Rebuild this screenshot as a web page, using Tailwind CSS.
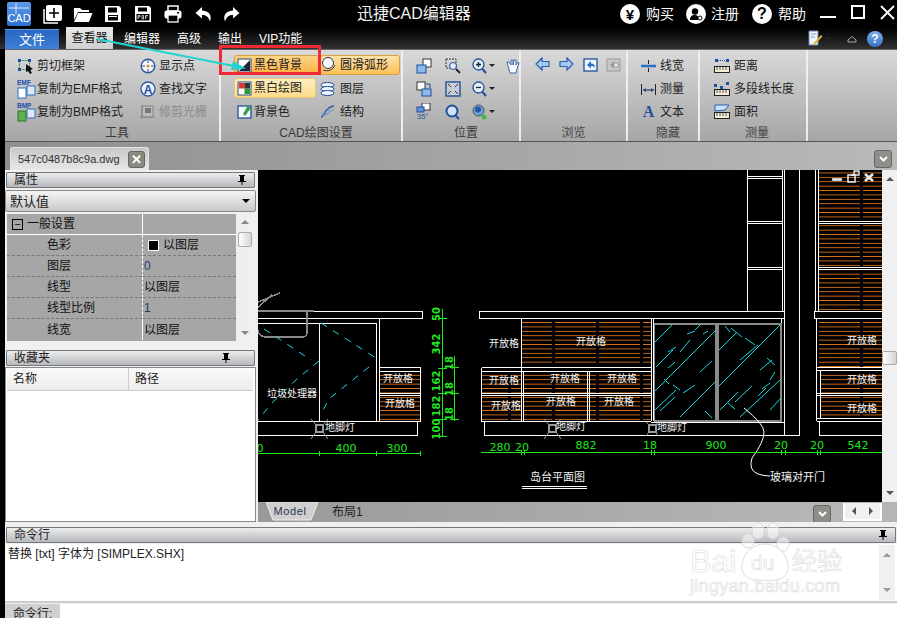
<!DOCTYPE html>
<html lang="zh-CN">
  <head>
    <meta charset="UTF-8" />
    <title>迅捷CAD编辑器</title>
    <script src="https://cdn.jsdelivr.net/npm/@tailwindcss/browser@4"></script>
  </head>
  <body class="overflow-hidden bg-black">
    <div class="relative flex flex-col w-[897px] h-[618px] overflow-hidden bg-black text-[12px] leading-none text-[#222] font-['Liberation_Sans','Noto_Sans_CJK_SC',sans-serif]">

      <!-- Title bar -->
      <header class="flex items-center h-[28px] shrink-0 bg-black text-white [&>*]:shrink-0 whitespace-nowrap">
        <div class="ml-[7px] w-[24px] h-[24px] rounded-[2px] bg-gradient-to-b from-[#5b9be8] to-[#2f6fd0] relative overflow-hidden flex items-end justify-center">
          <svg class="absolute inset-0" width="24" height="24" viewBox="0 0 24 24"><path d="M2 6H22M9 1V12" stroke="#dbe9ff" fill="none"/></svg>
          <span class="relative text-[11px] mb-[2px] text-white">CAD</span>
        </div>
        <svg class="ml-[12px]" width="20" height="20" viewBox="0 0 20 20"><path d="M1 5V19H15" fill="none" stroke="#fff" stroke-width="1.5"/><rect x="3" y="1" width="16" height="16" rx="2" fill="#fff"/><path d="M11 4V14M6 9H16" stroke="#000" stroke-width="1.6"/></svg>
        <svg class="ml-[10px]" width="20" height="18" viewBox="0 0 20 18"><path d="M1 3H7L9 5H16V7H5L1 15Z" fill="#fff"/><path d="M5 8H19.500L16 17H1Z" fill="#fff"/></svg>
        <svg class="ml-[11px]" width="18" height="18" viewBox="0 0 18 18"><path d="M1 1H15L17 3V17H1Z" fill="#fff"/><rect x="4" y="2.500" width="9" height="5" fill="#000"/><rect x="4" y="10" width="10" height="5.500" fill="#000"/><rect x="5" y="11" width="8" height="1" fill="#fff"/></svg>
        <svg class="ml-[12px]" width="18" height="18" viewBox="0 0 18 18"><path d="M1 1H15L17 3V17H1Z" fill="#fff"/><rect x="4" y="2.500" width="9" height="4" fill="#000"/><rect x="2.500" y="9" width="13" height="6.500" fill="#000"/><path d="M4 10.500V14M4 10.500H6V12H4M8 10.500V14H9.500V10.500H8M11.500 14V10.500H14M11.500 12H13.500" stroke="#fff" stroke-width=".7" fill="none"/></svg>
        <svg class="ml-[12px]" width="18" height="18" viewBox="0 0 18 18"><rect x="4" y="1" width="10" height="5" fill="none" stroke="#fff" stroke-width="1.500"/><rect x="0.500" y="5.500" width="17" height="8" rx="2" fill="#fff"/><rect x="4" y="10" width="10" height="7" fill="#000" stroke="#fff" stroke-width="1.300"/><rect x="13" y="7" width="2" height="1.500" fill="#000"/></svg>
        <svg class="ml-[13px]" width="18" height="18" viewBox="0 0 18 18"><path d="M7 2L0.500 8L7 13.500V10C11 10 13.500 11.500 15 16.500C17 11 15 6 7 5.500Z" fill="#fff"/></svg>
        <svg class="ml-[9px]" width="18" height="18" viewBox="0 0 18 18"><path d="M11 2L17.500 8L11 13.500V10C7 10 4.500 11.500 3 16.500C1 11 3 6 11 5.500Z" fill="#fff"/></svg>
        <span class="ml-[117px] w-[120px] text-[16px] text-[#f2f2f2]">迅捷CAD编辑器</span>
        <span class="ml-[143px] flex items-center justify-center w-[20px] h-[20px] rounded-full bg-white text-black text-[15px] font-bold">¥</span>
        <span class="ml-[6px] text-[14px] w-[28px]">购买</span>
        <span class="ml-[12px] w-[20px] h-[20px] rounded-full bg-white flex items-center justify-center">
          <svg width="14" height="14" viewBox="0 0 14 14"><circle cx="6" cy="4.500" r="3.200" fill="#000"/><path d="M1 13C1 9 3 8 6 8C8 8 9 9 9 10V13Z" fill="#000"/><circle cx="11" cy="11" r="2" fill="none" stroke="#000"/></svg>
        </span>
        <span class="ml-[5px] text-[14px] w-[28px]">注册</span>
        <span class="ml-[13px] flex items-center justify-center w-[20px] h-[20px] rounded-full bg-white text-black text-[16px] font-bold">?</span>
        <span class="ml-[6px] text-[14px] w-[28px]">帮助</span>
        <svg class="ml-[14px]" width="75" height="20" viewBox="0 0 75 20"><path d="M0 13H16" stroke="#fff" stroke-width="2"/><rect x="32" y="2" width="12" height="12" fill="none" stroke="#fff" stroke-width="2"/><path d="M61 2L74 15M74 2L61 15" stroke="#fff" stroke-width="1.800"/></svg>
      </header>

      <!-- Menu row -->
      <nav class="flex items-end h-[21px] shrink-0 pl-[5px] bg-gradient-to-b from-[#030303] to-[#333] text-white">
        <div class="w-[54px] h-[20px] flex items-center justify-center text-[13px] bg-gradient-to-b from-[#2a66c0] to-[#3f81d6] border-t border-[#5f9ae6]">文件</div>
        <div class="ml-[7px] w-[47px] h-[22px] flex items-center justify-center text-[#111] bg-gradient-to-b from-[#e8e8e8] to-[#d0d0d0]">查看器</div>
        <span class="ml-[11px] mb-[4px] w-[53px]">编辑器</span>
        <span class="mb-[4px] w-[41px]">高级</span>
        <span class="mb-[4px] w-[41px]">输出</span>
        <span class="mb-[4px] w-[100px]">VIP功能</span>
        <div class="ml-auto mr-[14px] mb-[2px] flex items-center">
          <svg width="16" height="17" viewBox="0 0 16 17"><path d="M2 1H11V15H2Z" fill="#eef2fb" stroke="#6a86b8"/><path d="M4 4H9M4 7H8" stroke="#7a9ad0"/><path d="M6 14L14 5L15.500 6.500L7.500 15Z" fill="#e8b028"/></svg>
          <span class="ml-[3px] w-0 h-0 border-x-[3px] border-t-[3px] border-x-transparent border-t-[#222]"></span>
          <svg class="ml-[15px]" width="10" height="8" viewBox="0 0 10 8"><path d="M1 5L5 1.500L9 5V7H1Z" fill="none" stroke="#aaa"/></svg>
          <span class="ml-[10px] flex items-center justify-center w-[16px] h-[16px] rounded-full bg-gradient-to-b from-[#7fb0ec] to-[#3a72c8] text-white text-[12px] font-bold">?</span>
        </div>
      </nav>

      <!-- Ribbon -->
      <section class="flex h-[93px] shrink-0 ml-[5px] bg-gradient-to-b from-[#d9d9d9] to-[#a6a6a6] border-b border-[#555] border-t border-t-[#666] text-[#222]">
        <!-- 工具 -->
        <div class="w-[216px] border-r-2 border-[#eee] flex flex-col pt-[4px]">
          <div class="grid grid-cols-[122px_1fr] auto-rows-[23px] pl-[13px] flex-1">
            <div class="flex items-center gap-[3px]">
              <svg width="16" height="16" viewBox="0 0 16 16"><rect x="1.500" y="2.500" width="10" height="9" fill="none" stroke="#2d8a3a" stroke-dasharray="2 1"/><path d="M0 1H3V4H0ZM10 1H13V4H10ZM0 10H3V13H0ZM10 10H13V13H10Z" fill="#1d4fa8"/><path d="M8 6L15 11L12 12L14 15L12 16L10 13L8 14Z" fill="#111"/></svg>
              <span>剪切框架</span>
            </div>
            <div class="flex items-center gap-[3px]">
              <svg width="16" height="16" viewBox="0 0 16 16"><circle cx="8" cy="8" r="6.800" fill="#f2f6fd" stroke="#33579c" stroke-width="1.400"/><path d="M8 1.500V5M8 11V14.500M1.500 8H5M11 8H14.500" stroke="#33579c"/><circle cx="8" cy="8" r="1.500" fill="#e08a20"/></svg>
              <span>显示点</span>
            </div>
            <div class="flex items-center gap-[1px] -ml-[1px]">
              <svg width="19" height="20" viewBox="0 0 19 20"><text x="0" y="6" font-size="6.500" font-weight="bold" fill="#1d4fa8">EMF</text><rect x="1" y="9" width="8" height="10" fill="#fff" stroke="#2a6fc4"/><rect x="10" y="7" width="8" height="9" fill="#dfe9f7" stroke="#2a6fc4"/></svg>
              <span>复制为EMF格式</span>
            </div>
            <div class="flex items-center gap-[3px]">
              <svg width="16" height="16" viewBox="0 0 16 16"><circle cx="8" cy="8" r="7" fill="#eef3fb" stroke="#33579c" stroke-width="1.300"/><text x="8" y="12.500" text-anchor="middle" font-size="12" font-weight="bold" fill="#1d4fa8">A</text></svg>
              <span>查找文字</span>
            </div>
            <div class="flex items-center gap-[1px] -ml-[1px]">
              <svg width="19" height="20" viewBox="0 0 19 20"><text x="0" y="6" font-size="6.500" font-weight="bold" fill="#1d4fa8">BMP</text><rect x="1" y="9" width="8" height="10" fill="#5fb04a" stroke="#2d7a2a"/><rect x="10" y="7" width="8" height="9" fill="#dfe9f7" stroke="#2a6fc4"/></svg>
              <span>复制为BMP格式</span>
            </div>
            <div class="flex items-center gap-[3px] text-[#8a8a8a]">
              <svg width="16" height="16" viewBox="0 0 16 16"><rect x="2" y="2" width="11" height="11" fill="#bbb" stroke="#888"/><rect x="5" y="4" width="6" height="5" fill="#777"/><path d="M0 13H15M2 15V1" stroke="#888"/></svg>
              <span>修剪光栅</span>
            </div>
          </div>
          <div class="pb-[2px] pl-[10px] text-center text-[#3a3a3a]">工具</div>
        </div>

        <!-- CAD绘图设置 -->
        <div class="w-[182px] border-r-2 border-[#eee] flex flex-col pt-[4px]">
          <div class="grid grid-cols-[85px_81px] auto-rows-[23px] pl-[13px] flex-1">
            <div class="flex items-center gap-[1px] h-[20px] mt-[1px] px-[2px] rounded-[3px] border border-[#d9a040] bg-gradient-to-b from-[#fdd587] to-[#fbb03a]">
              <svg width="15" height="15" viewBox="0 0 15 15"><rect x="1" y="1" width="13" height="13" fill="#fff" stroke="#25497f"/><path d="M2 13L13 2V13Z" fill="#223"/></svg>
              <span class="ml-[1px]">黑色背景</span>
            </div>
            <div class="flex items-center gap-[3px] h-[20px] mt-[1px] px-[1px] ml-[1px] w-[80px] rounded-[3px] border border-[#d9a040] bg-gradient-to-b from-[#fde3a8] to-[#fcc055]">
              <svg width="15" height="16" viewBox="0 0 15 16"><circle cx="6" cy="6" r="5.500" fill="#f7f9fd" stroke="#335"/><path d="M1 13C6 15 11 13 13 8" fill="none" stroke="#335"/></svg>
              <span>圆滑弧形</span>
            </div>
            <div class="flex items-center gap-[1px] h-[20px] mt-[1px] px-[2px] w-[82px] rounded-[3px] border border-[#e8c878] bg-gradient-to-b from-[#fdeec0] to-[#fddc88]">
              <svg width="15" height="15" viewBox="0 0 15 15"><rect x="1" y="1" width="13" height="13" fill="#fff" stroke="#25497f"/><path d="M2 2H7.500V7.500H2Z" fill="#d33"/><path d="M7.500 7.500H13V13H7.500Z" fill="#2a9a3a"/><path d="M7.500 2H13V7.500H7.500Z" fill="#333"/></svg>
              <span class="ml-[1px]">黑白绘图</span>
            </div>
            <div class="flex items-center gap-[3px] pl-[1px]">
              <svg width="15" height="14" viewBox="0 0 15 14"><ellipse cx="7.500" cy="3" rx="6.500" ry="2.500" fill="#eef4fd" stroke="#1f4f9a"/><ellipse cx="7.500" cy="7" rx="6.500" ry="2.500" fill="#eef4fd" stroke="#1f4f9a"/><ellipse cx="7.500" cy="11" rx="6.500" ry="2.500" fill="#eef4fd" stroke="#1f4f9a"/></svg>
              <span class="ml-[2px]">图层</span>
            </div>
            <div class="flex items-center gap-[1px] pl-[3px]">
              <svg width="15" height="15" viewBox="0 0 15 15"><rect x="1" y="2" width="13" height="12" fill="#f4f8fd" stroke="#1f4f9a" stroke-width="1.300"/><path d="M6 10L11 1L14 4L8 12Z" fill="#37a04a"/></svg>
              <span class="ml-[1px]">背景色</span>
            </div>
            <div class="flex items-center gap-[3px] pl-[1px]">
              <svg width="15" height="15" viewBox="0 0 15 15"><path d="M1 13C5 13 4 3 14 2" fill="none" stroke="#2a5fb0" stroke-width="1.500"/><path d="M1 9C6 14 10 6 14 6M4 7L7 11M7 4L11 8" fill="none" stroke="#6a8fc8"/></svg>
              <span class="ml-[2px]">结构</span>
            </div>
          </div>
          <div class="pb-[2px] pl-[10px] text-center text-[#3a3a3a]">CAD绘图设置</div>
        </div>

        <!-- 位置 -->
        <div class="w-[118px] border-r-2 border-[#eee] flex flex-col pt-[4px]">
          <div class="grid grid-cols-[29px_27px_33px_1fr] auto-rows-[23px] pl-[13px] items-center flex-1">
            <svg width="16" height="16" viewBox="0 0 16 16"><rect x="7" y="1" width="8" height="8" fill="#fff" stroke="#333"/><rect x="1" y="7" width="9" height="8" fill="#8fb8ea" stroke="#1f4f9a"/></svg>
            <svg width="16" height="16" viewBox="0 0 16 16"><rect x="1" y="1" width="10" height="9" fill="none" stroke="#333" stroke-dasharray="2 1"/><circle cx="8" cy="8" r="3.500" fill="#dfeafa" stroke="#26508f"/><path d="M11 11L15 15" stroke="#223" stroke-width="2"/></svg>
            <div class="flex items-center gap-[2px]">
              <svg width="15" height="16" viewBox="0 0 15 16"><circle cx="6.500" cy="6.500" r="5.500" fill="#e4eefb" stroke="#26508f" stroke-width="1.300"/><path d="M4 6.500H9M6.500 4V9" stroke="#123" stroke-width="1.300"/><path d="M10 10.500L14 15" stroke="#1f4f9a" stroke-width="2"/></svg>
              <span class="w-0 h-0 border-x-[3px] border-t-[3px] border-x-transparent border-t-[#222]"></span>
            </div>
            <svg width="16" height="16" viewBox="0 0 16 16"><path d="M3 8L2 4L4 4L6 7L6 2H8V7L9 2H11V7L13 4L14 5L12 11L11 15H5Z" fill="#f7f9fd" stroke="#3a66a8"/></svg>
            <svg width="16" height="16" viewBox="0 0 16 16"><rect x="1" y="1" width="8" height="8" fill="#fff" stroke="#333"/><path d="M10 3H14V7" fill="none" stroke="#1f4f9a"/><rect x="6" y="8" width="9" height="7" fill="#8fb8ea" stroke="#1f4f9a"/></svg>
            <svg width="16" height="16" viewBox="0 0 16 16"><rect x="1" y="1" width="14" height="14" fill="#c8ccd4" stroke="#1f4f9a" stroke-width="1.400"/><path d="M3 3L6 6M13 3L10 6M3 13L6 10M13 13L10 10" stroke="#333"/></svg>
            <div class="flex items-center gap-[2px]">
              <svg width="15" height="16" viewBox="0 0 15 16"><circle cx="6.500" cy="6.500" r="5.500" fill="#e4eefb" stroke="#26508f" stroke-width="1.300"/><path d="M4 6.500H9" stroke="#123" stroke-width="1.300"/><path d="M10 10.500L14 15" stroke="#1f4f9a" stroke-width="2"/></svg>
              <span class="w-0 h-0 border-x-[3px] border-t-[3px] border-x-transparent border-t-[#222]"></span>
            </div>
            <span></span>
            <svg width="17" height="17" viewBox="0 0 17 17"><rect x="6" y="0" width="8" height="7" fill="#fff" stroke="#333"/><rect x="1" y="4" width="7" height="5" fill="#5f92d8" stroke="#1f4f9a"/><text x="1" y="16" font-size="7.500" fill="#1f4f9a">35°</text></svg>
            <svg width="16" height="16" viewBox="0 0 16 16"><circle cx="7" cy="7" r="5.500" fill="#cfe0f7" stroke="#1f4f9a" stroke-width="2"/><path d="M10 11L14 15" stroke="#1f4f9a" stroke-width="2"/></svg>
            <div class="flex items-center gap-[2px]">
              <svg width="15" height="16" viewBox="0 0 15 16"><circle cx="6.500" cy="6.500" r="5.500" fill="#6f9bd8" stroke="#555"/><circle cx="6" cy="5.500" r="3" fill="#2558a8"/><circle cx="12" cy="13" r="2.500" fill="#3ec03e"/></svg>
              <span class="w-0 h-0 border-x-[3px] border-t-[3px] border-x-transparent border-t-[#222]"></span>
            </div>
          </div>
          <div class="pb-[2px] pl-[10px] text-center text-[#3a3a3a]">位置</div>
        </div>

        <!-- 浏览 -->
        <div class="w-[107px] border-r-2 border-[#eee] flex flex-col pt-[4px]">
          <div class="flex items-start gap-[9px] pl-[14px] pt-[3px] flex-1">
            <svg width="15" height="14" viewBox="0 0 15 14"><path d="M7 1L1 7L7 13V9.500H14V4.500H7Z" fill="#a9c8f0" stroke="#2a5fb0" stroke-width="1.200"/></svg>
            <svg width="15" height="14" viewBox="0 0 15 14"><path d="M8 1L14 7L8 13V9.500H1V4.500H8Z" fill="#a9c8f0" stroke="#2a5fb0" stroke-width="1.200"/></svg>
            <svg width="15" height="15" viewBox="0 0 15 15"><rect x="1" y="2" width="13" height="12" fill="#f0f5fd" stroke="#1f4f9a" stroke-width="1.300"/><path d="M4 8L8 4V6.500C11 6.500 12 8 12 11C11 9.500 10 9 8 9V11.500Z" fill="#2a6fc4"/></svg>
            <svg class="-ml-[1px]" width="15" height="15" viewBox="0 0 15 15"><rect x="1" y="2" width="13" height="12" fill="#c9c9c9" stroke="#999"/><path d="M4 8L8 4V11.500Z" fill="#999"/><rect x="8" y="6" width="4" height="4" fill="#eee" stroke="#999"/></svg>
          </div>
          <div class="pb-[2px] text-center text-[#444]">浏览</div>
        </div>

        <!-- 隐藏 -->
        <div class="w-[72px] border-r-2 border-[#eee] flex flex-col pt-[4px]">
          <div class="grid auto-rows-[23px] pl-[13px] flex-1">
            <div class="flex items-center gap-[4px]">
              <svg width="15" height="14" viewBox="0 0 15 14"><path d="M7.500 1V5M7.500 9V13" stroke="#222"/><path d="M0 7H15" stroke="#2a6fc4" stroke-width="2.500"/></svg>
              <span>线宽</span>
            </div>
            <div class="flex items-center gap-[4px]">
              <svg width="15" height="14" viewBox="0 0 15 14"><path d="M0.500 2V13M14.500 2V13M2 8H13" stroke="#222"/><path d="M2 8L5 6V10ZM13 8L10 6V10Z" fill="#1f4f9a"/></svg>
              <span>测量</span>
            </div>
            <div class="flex items-center gap-[4px]">
              <span class="w-[15px] text-center text-[16px] font-bold text-[#1f4f9a] font-['Liberation_Serif',serif]">A</span>
              <span>文本</span>
            </div>
          </div>
          <div class="pb-[2px] pl-[10px] text-center text-[#444]">隐藏</div>
        </div>

        <!-- 测量 -->
        <div class="w-[108px] border-r-2 border-[#eee] flex flex-col pt-[4px]">
          <div class="grid auto-rows-[23px] pl-[14px] flex-1">
            <div class="flex items-center gap-[4px]">
              <svg width="16" height="14" viewBox="0 0 16 14"><path d="M1 0H4V3H1ZM12 0H15V3H12Z" fill="#1d4fa8"/><path d="M4 1.500H12" stroke="#1d4fa8" stroke-dasharray="1 1"/><rect x="0.500" y="7.500" width="15" height="6" fill="#f4ecd2" stroke="#222"/><path d="M3 8V11M6 8V11M9 8V11M12 8V11" stroke="#555"/></svg>
              <span>距离</span>
            </div>
            <div class="flex items-center gap-[4px]">
              <svg width="16" height="14" viewBox="0 0 16 14"><path d="M0 2H3V5H0ZM6 4H9V7H6ZM12 0H15V3H12Z" fill="#1d4fa8"/><rect x="0.500" y="7.500" width="15" height="6" fill="#f4ecd2" stroke="#222"/><path d="M3 8V11M6 8V11M9 8V11M12 8V11" stroke="#555"/></svg>
              <span>多段线长度</span>
            </div>
            <div class="flex items-center gap-[4px]">
              <svg width="16" height="15" viewBox="0 0 16 15"><path d="M1 1H15L11 6L1 7Z" fill="#cfe2f8" stroke="#1d5fb0"/><rect x="0.500" y="8.500" width="15" height="6" fill="#f4ecd2" stroke="#222"/><path d="M3 9V12M6 9V12M9 9V12M12 9V12" stroke="#555"/></svg>
              <span>面积</span>
            </div>
          </div>
          <div class="pb-[2px] pl-[8px] text-center text-[#444]">测量</div>
        </div>
      </section>

      <!-- Document tabs -->
      <div class="flex items-end justify-between h-[28px] shrink-0 ml-[5px] pl-[5px] pr-[5px] bg-gradient-to-r from-[#8f8f8f] to-[#b9b9b9]">
        <div class="flex items-center w-[139px] h-[23px] pl-[7px] rounded-t-[3px] border border-b-0 border-[#e4e4e4] bg-gradient-to-b from-[#c8c8c8] to-[#e8e8e8] text-[#333]">
          <span class="w-[110px] text-[11px]">547c0487b8c9a.dwg</span>
          <span class="flex items-center justify-center w-[17px] h-[17px] rounded-[3px] border border-[#666] bg-[#8a8a80] text-white text-[13px] font-bold">✕</span>
        </div>
        <span class="mb-[2px] flex items-center justify-center w-[18px] h-[18px] rounded-[3px] border border-[#666] bg-[#8f8f8a]">
          <svg width="9" height="6" viewBox="0 0 9 6"><path d="M1 1L4.500 4.500L8 1" fill="none" stroke="#fff" stroke-width="2"/></svg>
        </span>
      </div>

      <!-- Main area -->
      <div class="flex h-[357px] shrink-0 ml-[5px] bg-[#f0f0f0]">
        <!-- Left panels -->
        <aside class="w-[251px] mr-[2px] shrink-0 flex flex-col pt-[2px] text-[#222]">
          <div class="flex items-center justify-between h-[16px] pl-[7px] pr-[8px] mx-[1px] border border-[#777] rounded-[1px] bg-gradient-to-b from-[#ececec] to-[#b6b9be]">
            <span class="text-[12px]">属性</span>
            <svg width="8" height="10" viewBox="0 0 8 10"><path d="M1 0H7V1H6V6H8V7H4.500V10H3.500V7H0V6H2V1H1Z" fill="#000"/></svg>
          </div>
          <div class="flex items-center justify-between h-[22px] mt-[2px] pl-[4px] pr-[5px] border border-[#888] rounded-[2px] bg-gradient-to-b from-[#f4f4f4] to-[#c9c9c9] text-[13px]">
            <span>默认值</span>
            <span class="w-0 h-0 border-x-[4px] border-t-[4px] border-x-transparent border-t-black"></span>
          </div>
          <!-- Property grid -->
          <div class="flex h-[127px] mt-[2px] mx-[2px] bg-[#f0f0f0]">
            <div class="w-[229px] grid grid-cols-[136px_1fr] auto-rows-[21px] bg-[#a6a6a6] text-[#111]">
              <div class="flex items-center gap-[4px] pl-[5px] border-r border-white border-b"><span class="flex items-center justify-center w-[11px] h-[11px] border border-black text-[11px]">−</span><span class="text-[12px]">一般设置</span></div>
              <div class="border-b border-white"></div>
              <div class="flex items-center pl-[40px] border-r border-white border-b border-dashed border-b-[#777]">色彩</div>
              <div class="flex items-center pl-[5px] gap-[4px] border-b border-dashed border-[#777]"><span class="w-[11px] h-[11px] bg-black border border-white"></span>以图层</div>
              <div class="flex items-center pl-[40px] border-r border-white border-b border-dashed border-b-[#777]">图层</div>
              <div class="flex items-center pl-[1px] border-b border-dashed border-[#777] text-[#223a70]">0</div>
              <div class="flex items-center pl-[40px] border-r border-white border-b border-dashed border-b-[#777]">线型</div>
              <div class="flex items-center pl-[1px] border-b border-dashed border-[#777]">以图层</div>
              <div class="flex items-center pl-[40px] border-r border-white border-b border-dashed border-b-[#777]">线型比例</div>
              <div class="flex items-center pl-[1px] border-b border-dashed border-[#777] text-[#223a70]">1</div>
              <div class="flex items-center pl-[40px] border-r border-white">线宽</div>
              <div class="flex items-center pl-[1px]">以图层</div>
            </div>
            <div class="relative w-[17px] bg-[#efefef] flex flex-col items-center justify-between py-[6px]">
              <span class="w-0 h-0 border-x-[4px] border-b-[4px] border-x-transparent border-b-[#888]"></span>
              <span class="absolute left-[2px] top-[18px] w-[14px] h-[15px] rounded-[2px] border border-[#aaa] bg-gradient-to-r from-white to-[#d4d4d4]"></span>
              <span class="w-0 h-0 border-x-[4px] border-t-[4px] border-x-transparent border-t-[#888]"></span>
            </div>
          </div>
          <div class="h-[9px]"></div>
          <div class="flex items-center justify-between h-[16px] pl-[7px] pr-[24px] mx-[1px] border border-[#777] rounded-[1px] bg-gradient-to-b from-[#ececec] to-[#b6b9be]">
            <span>收藏夹</span>
            <svg width="8" height="10" viewBox="0 0 8 10"><path d="M1 0H7V1H6V6H8V7H4.500V10H3.500V7H0V6H2V1H1Z" fill="#000"/></svg>
          </div>
          <div class="flex-1 mt-[1px] flex flex-col bg-white border border-[#888]">
            <div class="flex items-center h-[23px] ml-[1px] mr-[2px] bg-gradient-to-b from-[#fafafa] to-[#ececec] border-b border-[#ccc]">
              <span class="w-[122px] pl-[6px] border-r border-[#ccc] leading-[22px]">名称</span>
              <span class="pl-[6px]">路径</span>
            </div>
          </div>
          <div class="h-[5px]"></div>
        </aside>

        <!-- Drawing -->
        <div class="relative w-[624px] shrink-0 flex flex-col">
          <svg class="block shrink-0" width="624" height="332" viewBox="258 170 624 332" font-family="'Noto Sans CJK SC',sans-serif" shape-rendering="crispEdges">
            <defs>
              <pattern id="shelf" x="0" y="0" width="44" height="4.400" patternUnits="userSpaceOnUse">
                <path d="M0 1.500H24M27 1.500H44" stroke="#d9731a" stroke-width="1"/>
              </pattern>
            </defs>
            <rect x="258" y="170" width="624" height="332" fill="#000"/>

            <!-- shelf fills -->
            <rect x="522" y="319" width="129" height="47" fill="url(#shelf)"/>
            <rect x="482" y="372" width="39" height="21" fill="url(#shelf)"/>
            <rect x="482" y="396" width="39" height="24" fill="url(#shelf)"/>
            <rect x="523" y="372" width="128" height="21" fill="url(#shelf)"/>
            <rect x="523" y="396" width="128" height="24" fill="url(#shelf)"/>
            <rect x="380" y="372" width="40" height="21" fill="url(#shelf)"/>
            <rect x="380" y="396" width="40" height="24" fill="url(#shelf)"/>
            <rect x="818" y="170" width="64" height="51" fill="url(#shelf)"/>
            <rect x="818" y="224" width="64" height="43" fill="url(#shelf)"/>
            <rect x="818" y="270" width="64" height="41" fill="url(#shelf)"/>
            <rect x="816" y="319" width="66" height="48" fill="url(#shelf)"/>
            <rect x="820" y="372" width="62" height="21" fill="url(#shelf)"/>
            <rect x="820" y="396" width="62" height="22" fill="url(#shelf)"/>

            <!-- white outlines -->
            <g fill="none" stroke="#fff" stroke-width="1">
              <path d="M258 311.500H422.500V318.500H258M258 323.500H376.500M379.500 319V421M376.500 323V421M319.500 323V421"/>
              <path d="M258 421.500H420.500M258 435.500H417.500V422"/>
              <path d="M379.500 367.500H420.500V421M379.500 371.500H420.500M379.500 393.500H420.500M379.500 395.500H420.500"/>
              <path d="M479.500 311.500H784.500V318.500H479.500ZM521.500 319V421M481.500 367.500H651.500M481.500 371.500H651.500V367M481.500 367.500V421.500H651M481.500 393.500H651M481.500 395.500H651M523.500 371V421M587.500 371V421M589.500 371V421"/>
              <path d="M651.500 319V421M653.500 319V421M651 422.500H784.500V319M781.500 319V421M484.500 422V435.500H799.500V170M784.500 311V435"/>
              <path d="M747.500 170V311M782.500 170V311M784.500 170V311M747 176.500H782M747 178.500H782M747 221.500H782M747 223.500H782M747 267.500H782M747 269.500H782"/>
              <path d="M815.500 170V311M818.500 170V311M818 221.500H882M818 223.500H882M818 267.500H882M818 269.500H882"/>
              <path d="M882 311.500H814.500V318.500H882M816.500 319V421M816.500 367.500H882M816.500 370.500H882M820.500 371V418M816.500 393.500H882M816.500 395.500H882M816.500 418.500H882M816.500 421.500H882M819.500 422V435.500H882"/>
              <path d="M522 486.500H587M522 488.500H587"/>
            </g>

            <!-- grey sink and door frames -->
            <g fill="none" stroke="#8a8a8a" stroke-width="1.500">
              <path d="M258 311H314M307 311V332Q307 337 302 337H266Q259 337 258 330"/>
              <path d="M654.500 324H781V421H654.500ZM716 324V421M718 324V421"/>
              <path d="M258 302L280 293M258 307L272 295"/>
            </g>

            <!-- cyan hatch -->
            <g fill="none" stroke="#17d8e0" stroke-width="1" shape-rendering="auto">
              <path d="M264 329L311 360M319 361L298 378L272 403L258 420M321 323L376 358M369 367L330 398L320 415" stroke-dasharray="7 7"/>
              <path d="M655 342L672 325M700 325L695 330M708 331L703 334M656 367L673 350M655 391L716 330M680 352L690 340M668 368L675 362M712 361L700 372M655 410L676 390M715 382L680 417M660 411L675 397M712 418L705 411M683 393L695 385M664 379L669 384M673 385L680 390M676 347L668 352M687 334L695 331"/>
              <path d="M719 350L737 332M719 386L780 325M745 338L755 345M735 402L752 386M758 396L766 388M740 417L780 380M760 370L772 360M720 410L738 392M770 410L781 398M742 337L731 328M767 358L775 365M758 345L740 360M728 403L735 409M730 332L725 326M762 389L770 383M775 372L770 380"/>
            </g>

            <!-- leader -->
            <path d="M744 408Q764 424 764 432Q764 442 752 458Q748 470 758 474Q764 476 770 476" fill="none" stroke="#fff" shape-rendering="auto"/>

            <!-- green dimensions -->
            <g fill="none" stroke="#1ee81e" stroke-width="1">
              <path d="M442.500 309V437M454.500 356V421M438 318.500H447M438 368.500H447M438 393.500H447M438 419.500H447M438 436.500H447M450 367.500H459M450 393.500H459M450 419.500H459"/>
              <path d="M258 453.500H420M319 451V456M376 451V456M420 451V456"/>
              <path d="M481 452.500H882M521 450V455M524 450V455M651 450V455M654 450V455M781 450V455M785 450V455M817 450V455M820 450V455"/>
            </g>
            <g fill="#1ee81e" font-size="10" font-family="'DejaVu Sans',sans-serif" font-weight="bold">
              <text transform="translate(440 320) rotate(-90)" text-anchor="middle" y="0" x="6">50</text>
              <text transform="translate(440 344) rotate(-90)" text-anchor="middle">342</text>
              <text transform="translate(440 381) rotate(-90)" text-anchor="middle">162</text>
              <text transform="translate(440 406) rotate(-90)" text-anchor="middle">182</text>
              <text transform="translate(440 429) rotate(-90)" text-anchor="middle">100</text>
              <text transform="translate(453 363) rotate(-90)" text-anchor="middle">18</text>
              <text transform="translate(453 389) rotate(-90)" text-anchor="middle">18</text>
              <text transform="translate(453 414) rotate(-90)" text-anchor="middle">18</text>
            </g>
            <g fill="#1ee81e" font-size="11" font-family="'DejaVu Sans',sans-serif" text-anchor="middle">
              <text x="260" y="452">0</text><text x="346" y="452">400</text><text x="397" y="452">300</text>
              <text x="500" y="451">280</text><text x="522" y="451">20</text><text x="586" y="449">882</text>
              <text x="650" y="449">18</text><text x="716" y="449">900</text><text x="781" y="449">20</text>
              <text x="817" y="449">20</text><text x="858" y="449">542</text>
            </g>

            <!-- lamps -->
            <g fill="none" stroke="#999" stroke-width="2">
              <rect x="316" y="425" width="7" height="7"/><rect x="549" y="425" width="7" height="7"/><rect x="649" y="425" width="7" height="7"/>
            </g>
            <g fill="none" stroke="#999" stroke-width="1" shape-rendering="auto">
              <path d="M311 419L316 425M328 419L323 425M311 439L316 432M328 439L323 432M544 419L549 425M561 419L556 425M544 439L549 432M561 439L556 432M646 422L649 425M658 422L656 425M646 436L649 432M658 436L656 432"/>
            </g>

            <!-- labels -->
            <g fill="#f4f4f4" font-size="10" stroke="none">
              <text x="489" y="347">开放格</text><text x="576" y="345">开放格</text>
              <text x="383" y="382">开放格</text><text x="385" y="407">开放格</text>
              <text x="489" y="384">开放格</text><text x="491" y="409">开放格</text>
              <text x="550" y="382">开放格</text><text x="546" y="405">开放格</text>
              <text x="607" y="382">开放格</text><text x="604" y="405">开放格</text>
              <text x="847" y="344">开放格</text><text x="847" y="383">开放格</text><text x="847" y="412">开放格</text>
              <text x="267" y="397">垃圾处理器</text>
              <text x="325" y="431">地脚灯</text><text x="556" y="430">地脚灯</text><text x="657" y="431">地脚灯</text>
              <text x="530" y="481" font-size="11">岛台平面图</text>
              <text x="770" y="481" font-size="11">玻璃对开门</text>
            </g>

            <!-- mdi buttons -->
            <g shape-rendering="auto">
              <rect x="832" y="178" width="10" height="3" fill="#e8eef6" stroke="#555" stroke-width=".5"/>
              <path d="M851 175H859V171H854V175" fill="none" stroke="#e8eef6" stroke-width="1.300"/>
              <rect x="848" y="175" width="7" height="7" fill="none" stroke="#e8eef6" stroke-width="1.500"/>
              <path d="M865 174L873 181M873 174L865 181" stroke="#e8eef6" stroke-width="2.500"/>
            </g>
          </svg>

          <!-- Layout tabs -->
          <div class="flex items-center h-[20px] bg-gradient-to-r from-[#999] to-[#b9b9b9] text-[#222]">
            <svg class="ml-[7px] -mt-[1px]" width="54" height="19" viewBox="0 0 54 19"><path d="M1 0L8 18H46L53 0Z" fill="#cfcfcf" stroke="#eee"/><text x="25" y="13" text-anchor="middle" font-size="11" font-family="'Liberation Sans',sans-serif" letter-spacing=".6" fill="#2b3350">Model</text></svg>
            <span class="ml-[13px] text-[12px]">布局1</span>
            <span class="ml-auto mr-[12px] mt-[3px] flex items-center justify-center w-[18px] h-[18px] rounded-[3px] border border-[#666] bg-[#8f8f8a]">
              <svg width="9" height="6" viewBox="0 0 9 6"><path d="M1 1L4.500 4.500L8 1" fill="none" stroke="#fff" stroke-width="2"/></svg>
            </span>
            <div class="flex items-center justify-around w-[39px] h-[18px] mb-[1px] bg-[#f0f0f0] border-x-2 border-b-2 border-white">
              <span class="w-0 h-0 border-y-[4px] border-r-[4px] border-y-transparent border-r-[#555]"></span>
              <span class="w-0 h-0 border-y-[4px] border-l-[4px] border-y-transparent border-l-[#555]"></span>
            </div>
          </div>
          <div class="h-[5px] bg-[#f0f0f0]"></div>
        </div>

        <!-- Right scrollbar -->
        <div class="relative w-[15px] shrink-0 flex flex-col">
          <div class="relative h-[332px] bg-[#f0f0f0] flex flex-col items-center justify-between pt-[7px] pb-[7px]">
            <span class="w-0 h-0 border-x-[4px] border-b-[4px] border-x-transparent border-b-[#555]"></span>
            <span class="absolute left-0 top-[181px] w-[15px] h-[14px] rounded-[2px] border border-[#aaa] bg-gradient-to-r from-white to-[#d4d4d4]"></span>
            <span class="w-0 h-0 border-x-[4px] border-t-[4px] border-x-transparent border-t-[#555]"></span>
          </div>
          <div class="h-[20px] bg-[#b5b5b5]"></div>
          <div class="h-[5px] bg-[#f0f0f0]"></div>
        </div>
      </div>

      <!-- Command panel -->
      <section class="flex flex-col flex-1 ml-[5px] bg-[#f0f0f0] text-[#222]">
        <div class="flex items-center justify-between h-[16px] pl-[7px] pr-[8px] mx-[1px] border border-[#777] rounded-[1px] bg-gradient-to-b from-[#ececec] to-[#b6b9be]">
          <span>命令行</span>
          <svg width="8" height="10" viewBox="0 0 8 10"><path d="M1 0H7V1H6V6H8V7H4.500V10H3.500V7H0V6H2V1H1Z" fill="#000"/></svg>
        </div>
        <div class="flex h-[59px] mt-[1px] bg-white border-b-2 border-[#c8ccd0]">
          <p class="flex-1 pl-[3px] pt-[4px] whitespace-nowrap">替换 [txt] 字体为 [SIMPLEX.SHX]</p>
          <div class="w-[16px] mr-[2px] my-[1px] bg-[#f0f0f0] flex flex-col items-center justify-between py-[8px]">
            <span class="w-0 h-0 border-x-[4px] border-b-[4px] border-x-transparent border-b-[#999]"></span>
            <span class="w-0 h-0 border-x-[4px] border-t-[4px] border-x-transparent border-t-[#999]"></span>
          </div>
        </div>
        <div class="flex flex-1 mt-[1px]">
          <span class="w-[55px] pl-[8px] pt-[4px] bg-[#d0d0d0]">命令行:</span>
          <span class="flex-1 bg-white"></span>
        </div>
      </section>

      <!-- Annotation: red box and cyan arrow -->
      <div class="absolute left-[219px] top-[45px] w-[102px] h-[30px] border-[3px] border-[#ee2b35]"></div>
      <svg class="absolute left-0 top-0 pointer-events-none" width="260" height="80" viewBox="0 0 260 80">
        <path d="M97 39L234 66" stroke="#22d4cf" stroke-width="2"/>
        <path d="M246 68.500L231 70L233 61Z" fill="#22d4cf"/>
      </svg>

      <!-- Baidu watermark -->
      <div class="absolute left-[688px] top-[520px] w-[170px] h-[90px] pointer-events-none">
        <svg class="absolute left-[0px] top-[0px]" width="170" height="90" viewBox="0 0 170 90">
          <g fill="#fff" fill-opacity=".5" stroke="#dcdcdc">
            <ellipse cx="70" cy="11" rx="6" ry="8"/><ellipse cx="85" cy="11" rx="6" ry="8"/><ellipse cx="60" cy="21" rx="6" ry="7"/><ellipse cx="95" cy="24" rx="6" ry="7"/>
            <path d="M54 44C56 30 68 24 77 24C88 24 98 32 100 44C102 58 90 62 78 60C64 62 52 58 54 44Z"/>
          </g>
          <g fill="#fff" stroke="#e0e0e0" stroke-width=".7" font-family="'Liberation Sans','Noto Sans CJK SC',sans-serif">
            <text x="2" y="52" font-size="32">Bai</text>
            <text x="63" y="50" font-size="21">du</text>
            <text x="104" y="50" font-size="25">经验</text>
            <text x="2" y="72" font-size="18" letter-spacing=".3">jingyan.baidu.com</text>
          </g>
        </svg>
      </div>
    </div>
  </body>
</html>
